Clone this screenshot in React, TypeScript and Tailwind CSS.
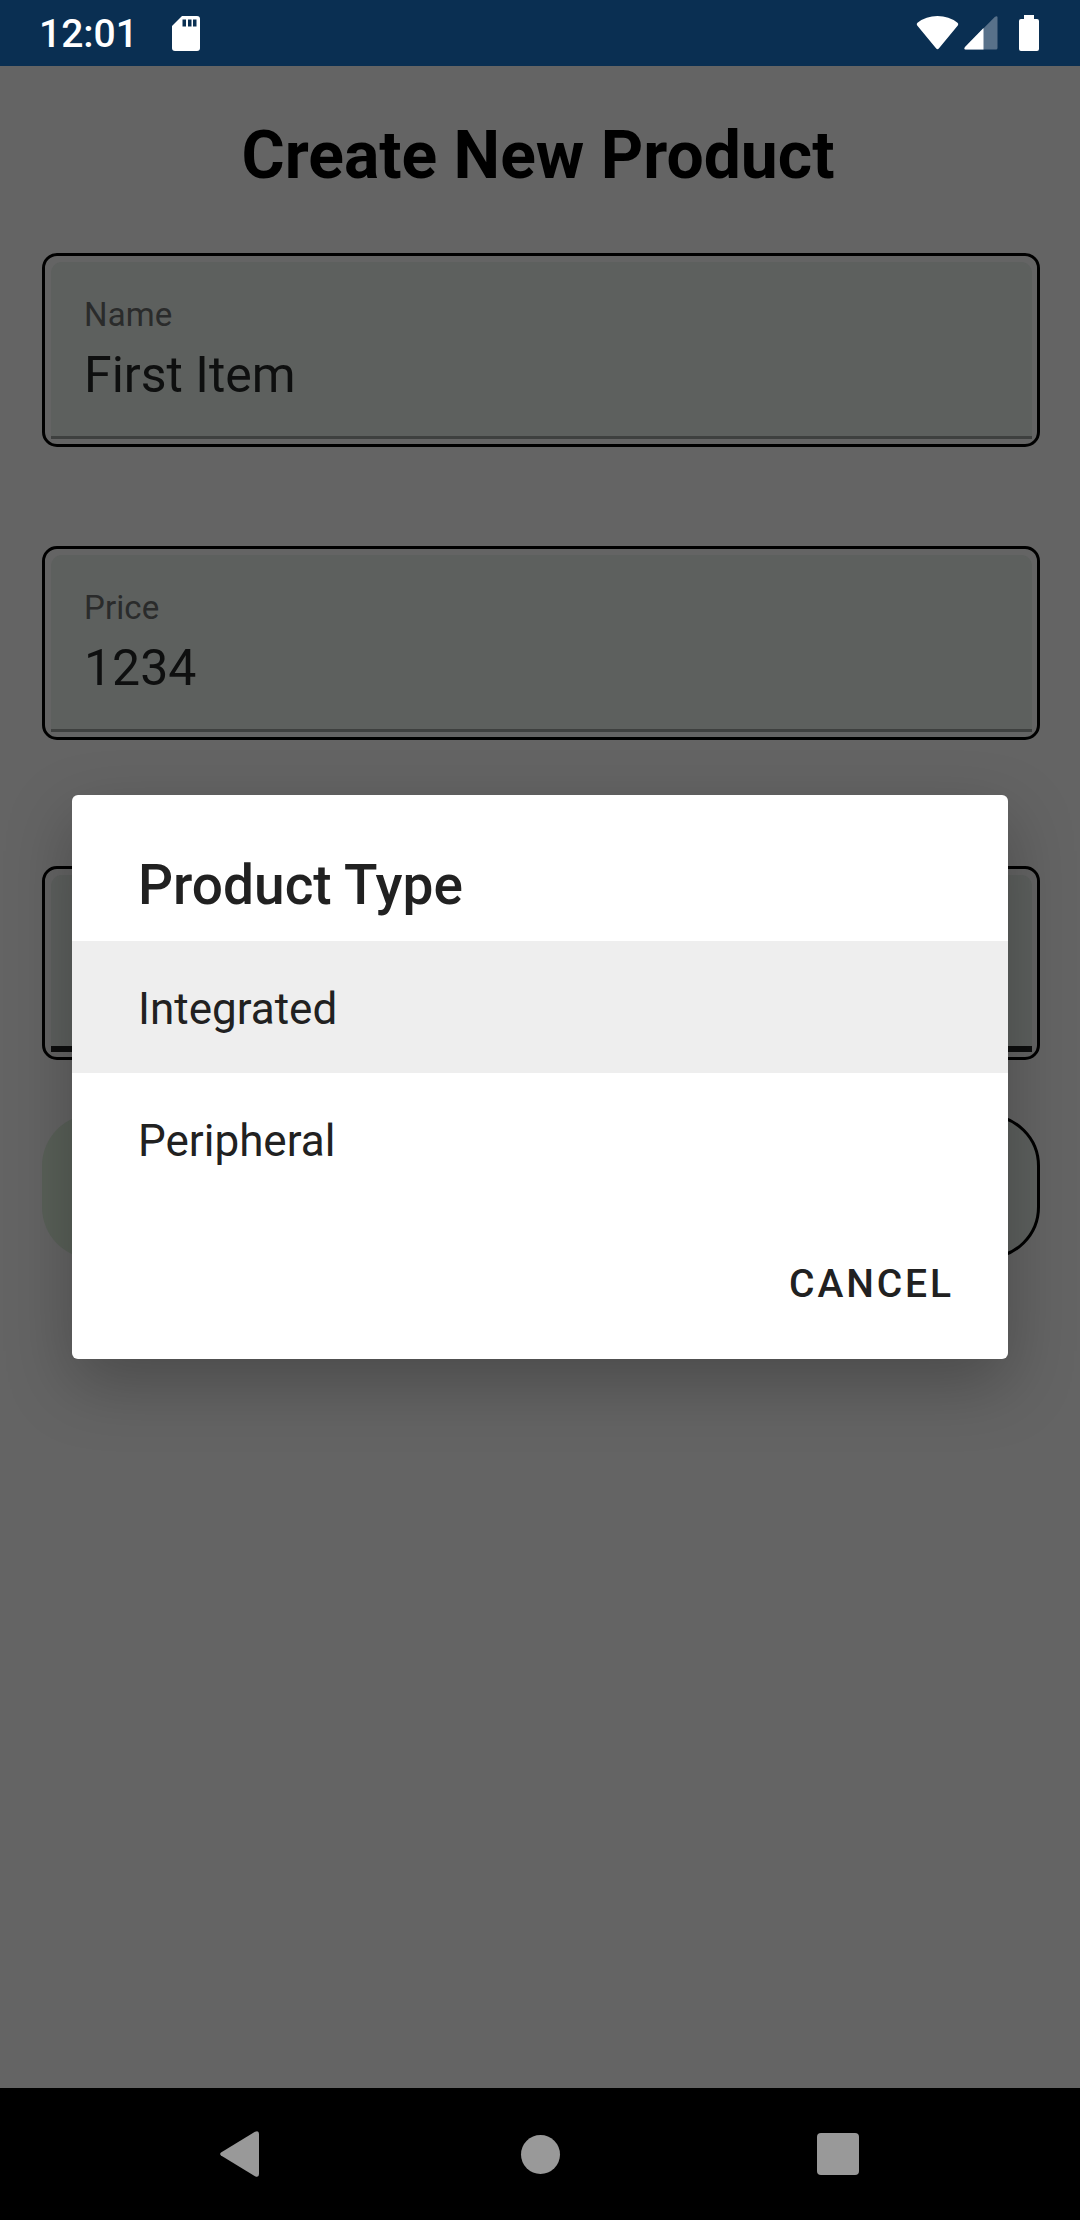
type FieldProps = { label?: string; value?: string; focused?: boolean; className?: string };

function Field({ label, value, focused, className = "" }: FieldProps) {
  return (
    <div className={`h-[194px] w-[998px] rounded-[15px] border-[3px] border-black p-[6px] pr-[5px] pb-[5px] ${className}`}>
      <div
        className={`flex h-full flex-col rounded-t-[11px] bg-[#5d605e] pl-[33px] ${
          focused ? "border-b-[6px] border-[#0d0e0e]" : "border-b-[3px] border-[#3e403f]"
        }`}
      >
        <span className="mt-[33px] h-[40px] text-[33px] leading-[40px] tracking-[0.1px] text-[#2a2b2b]">{label}</span>
        <span className="mt-[7px] text-[50px] leading-[66px] text-[#0e0f0f]">{value}</span>
      </div>
    </div>
  );
}

function StatusBar() {
  return (
    <header className="flex h-[66px] items-center bg-[#0a2f52] text-white">
      <span className="ml-[39px] w-[133px] pt-[2px] text-[39px] leading-[66px] font-medium">12:01</span>
      <svg className="h-[35px] w-[28px]" viewBox="0 0 28 35" fill="none">
        <path d="M10 0H25Q28 0 28 3V32Q28 35 25 35H3Q0 35 0 32V10Z" fill="#fff" />
        <path d="M10.500 3.500h3.500v7h-3.500zM16 3.500h3.500v7H16zM21 3.500h3.500v7H21z" fill="#0a2f52" />
      </svg>
      <svg className="ml-[716px] h-[34px] w-[44px]" viewBox="0 0 44 34">
        <path d="M1.200 9.500Q0 7.800 1.500 6.700Q10 0 21.500 0Q33 0 41.500 6.700Q43 7.800 41.800 9.500L22.800 32.500Q21.500 34 20.200 32.500Z" fill="#fff" />
      </svg>
      <svg className="ml-[4px] h-[34px] w-[34px]" viewBox="0 0 34 34">
        <path d="M31 .7Q33.500 -.7 33.500 1.500V32Q33.500 33.500 32 33.500H1.500Q-.5 33.500 1 31Z" fill="#58718a" />
        <path d="M19.500 12V33.500H1.500Q-.5 33.500 1 31Z" fill="#fff" />
      </svg>
      <svg className="ml-[21px] h-[36px] w-[20px]" viewBox="0 0 20 36">
        <path d="M5 0H15V4H18Q20 4 20 6V34Q20 36 18 36H2Q0 36 0 34V6Q0 4 2 4H5Z" fill="#fff" />
      </svg>
    </header>
  );
}

function ProductTypeDialog() {
  return (
    <div
      role="dialog"
      className="absolute top-[795px] left-[72px] h-[564px] w-[936px] rounded-[6px] bg-white text-[#212121] shadow-[0_24px_66px_rgba(0,0,0,0.26)]"
    >
      <h2 className="h-[146px] pt-[55px] pl-[66px] text-[55px] leading-[70px] font-medium">Product Type</h2>
      <div className="h-[132px] bg-[#eeeeee] pl-[66px] text-[44px] leading-[136px]">Integrated</div>
      <div className="h-[132px] pl-[66px] text-[44px] leading-[136px]">Peripheral</div>
      <div className="flex justify-end pt-[46px] pr-[54px]">
        <button className="text-[39px] leading-[66px] font-medium tracking-[2.900px]">CANCEL</button>
      </div>
    </div>
  );
}

function NavigationBar() {
  return (
    <nav className="flex h-[132px] items-center bg-black">
      <svg className="ml-[220px] h-[46px] w-[39px]" viewBox="0 0 39 46" fill="#999">
        <path d="M1 21.500L35 .8Q39 -1 39 3V43Q39 47 35 45.200L1 24.500Q-.7 23 1 21.500Z" />
      </svg>
      <div className="ml-[262px] size-[39px] rounded-full bg-[#999]" />
      <div className="ml-[257px] size-[42px] rounded-[4px] bg-[#999]" />
    </nav>
  );
}

export default function App() {
  return (
    <div className="relative flex h-[2220px] w-[1080px] flex-col overflow-hidden bg-[#646464] font-['Roboto',sans-serif]">
      <StatusBar />
      <main className="flex flex-1 flex-col pl-[42px]">
        <h1 className="mt-[46px] w-[992px] text-center text-[66px] leading-[88px] font-bold text-black">Create New Product</h1>
        <Field className="mt-[53px]" label="Name" value="First Item" />
        <Field className="mt-[99px]" label="Price" value="1234" />
        <Field className="mt-[126px]" focused />
        <div className="mt-[54px] flex w-[998px] justify-between">
          <div className="h-[145px] w-[480px] rounded-[52px] bg-[#596058]" />
          <div className="h-[145px] w-[480px] rounded-[52px] border-[3px] border-black bg-[#5d605e]" />
        </div>
      </main>
      <NavigationBar />
      <ProductTypeDialog />
    </div>
  );
}
